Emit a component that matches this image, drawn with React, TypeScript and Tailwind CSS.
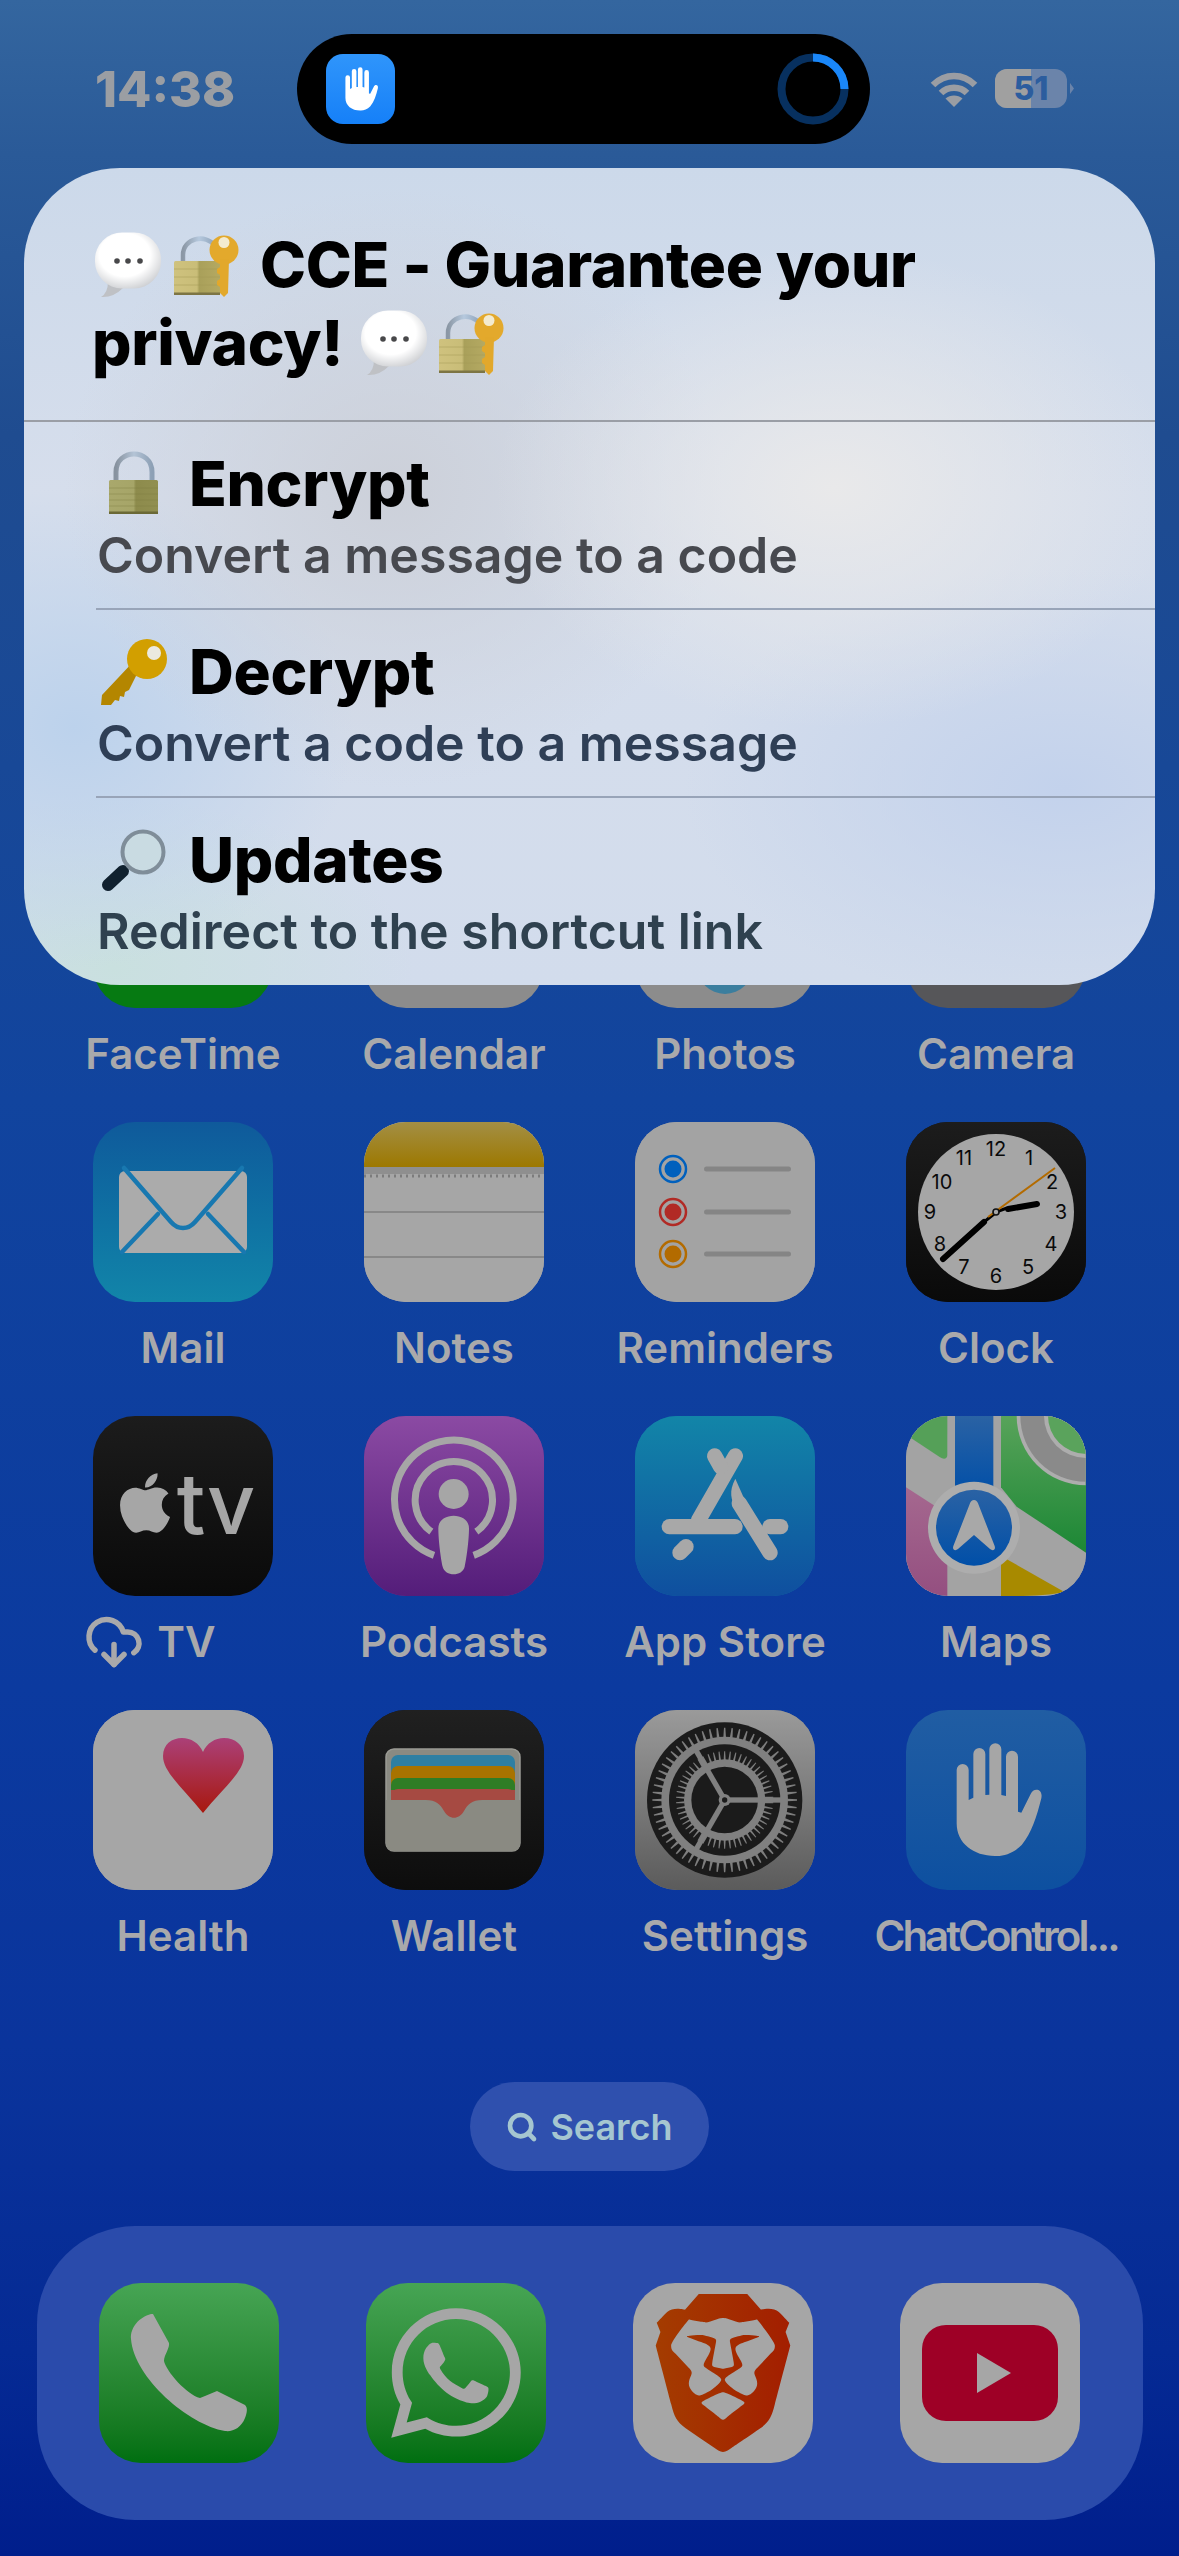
import { Search, CloudDownload } from 'lucide-react';
import { FaApple, FaWhatsapp } from 'react-icons/fa';
import { SiBrave } from 'react-icons/si';
import type { ReactNode } from 'react';

const GLYPH = '#a6a6a6';

// all hand-made icons use a 180 box, or 540 where the coordinates were read from a zoomed crop
function Tile({ className, children }: { className: string; children?: ReactNode }) {
  return (
    <div className={`relative w-[180px] h-[180px] rounded-[42px] overflow-hidden shrink-0 flex items-center justify-center ${className}`}>
      {children}
    </div>
  );
}

function Art({ box = 180, children }: { box?: number; children: ReactNode }) {
  return (
    <svg viewBox={`0 0 ${box} ${box}`} className="w-[180px] h-[180px] block">
      {children}
    </svg>
  );
}

function HandPath({ fill }: { fill: string }) {
  return (
    <path
      fill={fill}
      d="M1010 210a18 18 0 0 1 36 0L1046 300L1060 293L1060 162a18 18 0 0 1 36 0L1096 285L1108 284L1108 148a18 18 0 0 1 36 0L1144 285L1158 288L1158 170a18 18 0 0 1 36 0L1194 335L1204 338L1232 282C1240 262 1270 265 1264 295C1250 350 1235 400 1205 435C1180 460 1150 470 1125 468C1060 468 1010 430 1010 370Z"
    />
  );
}

function Mail() {
  return (
    <Art>
      <rect x="26" y="49" width="128" height="82" rx="6" fill="#ababab" />
      <g fill="none" stroke="#1878b0" strokeWidth="4.5" strokeLinecap="round">
        <path d="M31 46L78 100C85 108 95 108 102 100L149 46" />
        <path d="M65 92L29 130M115 92L151 130" />
      </g>
    </Art>
  );
}

function Notes() {
  return (
    <Art>
      <defs>
        <linearGradient id="notesTop" x1="0" y1="0" x2="0" y2="1">
          <stop offset="0" stopColor="#a38f45" />
          <stop offset="1" stopColor="#9d7800" />
        </linearGradient>
      </defs>
      <rect width="180" height="180" fill="#a6a6a6" />
      <rect width="180" height="45" fill="url(#notesTop)" />
      <rect y="45" width="180" height="7" fill="#8f8f8f" />
      <line x1="0" x2="180" y1="54" y2="54" stroke="#7c7c7c" strokeWidth="3" strokeDasharray="2 4" />
      <rect y="89" width="180" height="2" fill="#888888" />
      <rect y="134" width="180" height="2" fill="#888888" />
    </Art>
  );
}

function Reminders() {
  const dots = [
    { y: 47, c: '#0060bd' },
    { y: 90, c: '#b12a25' },
    { y: 132, c: '#b36b00' },
  ];
  return (
    <Art>
      <rect width="180" height="180" fill="#a3a3a3" />
      {dots.map(d => (
        <g key={d.y}>
          <circle cx="38" cy={d.y} r="13" fill="none" stroke={d.c} strokeWidth="2.5" />
          <circle cx="38" cy={d.y} r="8.5" fill={d.c} />
          <rect x="69" y={d.y - 2.5} width="87" height="5" rx="2.5" fill="#858585" />
        </g>
      ))}
    </Art>
  );
}

function Clock() {
  const nums = [
    ['12', 90, 34], ['1', 123, 43], ['2', 146, 67], ['3', 155, 97], ['4', 145, 129], ['5', 122, 152],
    ['6', 90, 161], ['7', 58, 152], ['8', 34, 129], ['9', 24, 97], ['10', 36, 67], ['11', 58, 43],
  ] as const;
  return (
    <Art>
      <defs>
        <linearGradient id="clockBg" x1="0" y1="0" x2="0" y2="1">
          <stop offset="0" stopColor="#1c1c1c" />
          <stop offset="1" stopColor="#0a0a0a" />
        </linearGradient>
      </defs>
      <rect width="180" height="180" fill="url(#clockBg)" />
      <circle cx="90" cy="90" r="78" fill="#a6a6a6" />
      {nums.map(([n, x, y]) => (
        <text key={n} x={x} y={y} textAnchor="middle" fontSize="20" fontFamily="Inter, sans-serif" fill="#0a0a0a">
          {n}
        </text>
      ))}
      <path d="M90 90L101 86" stroke="#000" strokeWidth="3" />
      <path d="M102 87L131 82" stroke="#000" strokeWidth="6" strokeLinecap="round" />
      <path d="M88 92L78 100" stroke="#000" strokeWidth="3" />
      <path d="M78 100L37 137" stroke="#000" strokeWidth="6" strokeLinecap="round" />
      <path d="M82 95L149 46" stroke="#b36b00" strokeWidth="2" />
      <circle cx="90" cy="90" r="3" fill="#a6a6a6" stroke="#111" strokeWidth="1.6" />
    </Art>
  );
}

function AppleTv() {
  return (
    <div className="flex items-center">
      <FaApple size={68} color={GLYPH} className="-mt-[6px]" />
      <span className="text-[84px] leading-none font-medium text-[#a6a6a6] -ml-[2px] -mt-[4px]">tv</span>
    </div>
  );
}

function Podcasts() {
  return (
    <Art box={540}>
      <defs>
        <linearGradient id="podBg" x1="0" y1="0" x2="0" y2="1">
          <stop offset="0" stopColor="#8b4aa3" />
          <stop offset="1" stopColor="#541d7a" />
        </linearGradient>
      </defs>
      <rect width="540" height="540" fill="url(#podBg)" />
      <g transform="translate(-853 -48)">
        <g fill="none" stroke={GLYPH} strokeWidth="21">
          <path d="M1063 466A178 178 0 1 1 1182 466" />
          <path d="M1055 395A116 116 0 1 1 1190 395" />
        </g>
        <circle cx="1122" cy="282" r="45" fill={GLYPH} />
        <path fill={GLYPH} d="M1076 385C1076 335 1168 335 1168 385C1168 420 1160 480 1155 500C1148 530 1096 530 1089 500C1084 480 1076 420 1076 385Z" />
      </g>
    </Art>
  );
}

function AppStore() {
  return (
    <Art box={540}>
      <defs>
        <linearGradient id="asBg" x1="0" y1="0" x2="0" y2="1">
          <stop offset="0" stopColor="#1285a8" />
          <stop offset="1" stopColor="#0f4f9f" />
        </linearGradient>
      </defs>
      <rect width="540" height="540" fill="url(#asBg)" />
      <g transform="translate(-45 -48)" fill="none" stroke="#a8a8a8" strokeWidth="46" strokeLinecap="round">
        <path d="M346 168L236 360" />
        <path d="M284 168L302 200" />
        <path d="M148 380H345" strokeLinecap="round" />
        <path d="M450 380H482" />
        <path d="M358 310L450 458" />
        <path d="M198 440L180 458" />
      </g>
      <g transform="translate(-45 -48)" fill="#a8a8a8">
        <path d="M346 236C325 275 335 300 345 320L400 340L370 290Z" />
      </g>
    </Art>
  );
}

function Maps() {
  return (
    <Art box={540}>
      <defs>
        <linearGradient id="mapGreen" x1="0" y1="0" x2="0" y2="1">
          <stop offset="0" stopColor="#58a35a" />
          <stop offset="1" stopColor="#1c8735" />
        </linearGradient>
        <linearGradient id="mapBlue" x1="0" y1="0" x2="0" y2="1">
          <stop offset="0" stopColor="#2a62a4" />
          <stop offset="1" stopColor="#004fa8" />
        </linearGradient>
        <linearGradient id="mapPink" x1="0" y1="0" x2="0" y2="1">
          <stop offset="0" stopColor="#a5688f" />
          <stop offset="1" stopColor="#944f80" />
        </linearGradient>
        <clipPath id="mapCorner">
          <rect x="1143" y="48" width="254" height="300" />
        </clipPath>
      </defs>
      <g transform="translate(-858 -48)">
        <rect x="858" y="48" width="540" height="540" fill="#a3a3a3" />
        <path d="M858 48V104L960 172C972 180 982 176 982 165V48Z" fill="#55a058" />
        <rect x="1005" y="48" width="115" height="240" fill="url(#mapBlue)" />
        <path d="M1143 48V262L1190 320L1398 458V48Z" fill="url(#mapGreen)" />
        <g clipPath="url(#mapCorner)">
          <circle cx="1398" cy="48" r="208" fill="#adadad" />
          <circle cx="1398" cy="48" r="197" fill="#8a8a8a" />
          <circle cx="1398" cy="48" r="126" fill="#adadad" />
          <circle cx="1398" cy="48" r="114" fill="#5aa35c" />
        </g>
        <path d="M858 262L945 318L982 400V588H858Z" fill="url(#mapPink)" />
        <path d="M1143 468L1332 575C1290 588 1200 588 1143 588Z" fill="#a88a00" />
        <circle cx="1062" cy="383" r="138" fill="#adadad" />
        <circle cx="1062" cy="383" r="114" fill="url(#mapBlue)" />
        <path d="M1062 300C1068 300 1072 305 1074 310L1124 438C1128 450 1118 454 1110 447L1062 405L1014 447C1006 454 996 450 1000 438L1050 310C1052 305 1056 300 1062 300Z" fill="#a8a8a8" />
      </g>
    </Art>
  );
}

function Health() {
  return (
    <Art>
      <defs>
        <linearGradient id="heart" x1="0" y1="0" x2="0" y2="1">
          <stop offset="0" stopColor="#ab4078" />
          <stop offset="1" stopColor="#a8180e" />
        </linearGradient>
      </defs>
      <rect width="180" height="180" fill="#a6a6a6" />
      <path fill="url(#heart)" d="M110 103C90 78 70 62 70 46C70 34 79 28 89 28C98 28 106 33 110 42C114 33 122 28 131 28C142 28 151 35 151 46C151 62 130 78 110 103Z" />
    </Art>
  );
}

function Wallet() {
  const bands = [
    { y: 45, c: '#2e7fa3' },
    { y: 56, c: '#a87300' },
    { y: 68, c: '#2f7d25' },
    { y: 79, c: '#a64a42' },
  ];
  return (
    <Art>
      <defs>
        <linearGradient id="walletBg" x1="0" y1="0" x2="0" y2="1">
          <stop offset="0" stopColor="#202020" />
          <stop offset="1" stopColor="#0d0d0d" />
        </linearGradient>
      </defs>
      <rect width="180" height="180" fill="url(#walletBg)" />
      <rect x="22" y="39" width="134" height="102" rx="8" fill="#8a8a82" stroke="#9a9a94" strokeWidth="1.5" />
      {bands.map(b => (
        <rect key={b.y} x="27" y={b.y} width="124" height="30" rx="7" fill={b.c} />
      ))}
      <path d="M22 90H156V134C156 138 153 141 149 141H30C25 141 22 138 22 134Z" fill="#8a8a82" />
      <path d="M27 80H151V90H118C108 90 104 94 100 101C95 110 85 110 80 101C76 94 72 90 62 90H27Z" fill="#a64a42" />
    </Art>
  );
}

function Settings() {
  const outer = Array.from({ length: 60 }, (_, i) => i * 6);
  const inner = Array.from({ length: 54 }, (_, i) => (i * 360) / 54);
  return (
    <Art box={540}>
      <defs>
        <linearGradient id="setBg" x1="0" y1="0" x2="0" y2="1">
          <stop offset="0" stopColor="#9a9a9a" />
          <stop offset="1" stopColor="#5b5b5b" />
        </linearGradient>
      </defs>
      <rect width="540" height="540" fill="url(#setBg)" />
      <g transform="translate(269 270)">
        <circle r="233" fill="#1b1b1b" />
        {outer.map(a => (
          <path key={a} transform={`rotate(${a})`} d="M-4 -188L-2 -217H2L4 -188Z" fill="#7d7d7d" />
        ))}
        <circle r="190" fill="#808080" />
        <circle r="167" fill="#1b1b1b" />
        {inner.map(a => (
          <path key={a} transform={`rotate(${a})`} d="M-3 -120L-1.5 -146H1.5L3 -120Z" fill="#7d7d7d" />
        ))}
        <circle r="122" fill="#808080" />
        <circle r="100" fill="#1b1b1b" />
        {[90, 210, 330].map(a => (
          <rect key={a} transform={`rotate(${a})`} x="-8" y="-172" width="16" height="172" fill="#808080" />
        ))}
        <circle r="18" fill="#808080" />
        <circle r="8" fill="#1b1b1b" />
      </g>
    </Art>
  );
}

function ChatControl() {
  return (
    <Art box={540}>
      <g transform="translate(-858 -30)">
        <HandPath fill={GLYPH} />
      </g>
    </Art>
  );
}

function Phone() {
  return (
    <Art>
      <path fill={GLYPH} d="M52 31L54 31L70 60C71 65 65 72 65 78C67 88 88 112 101 115L106 113L118 108L146 122C149 125 148 130 146 135C142 145 134 149 126 148C90 142 35 95 32 56C31 45 40 34 52 31Z" />
    </Art>
  );
}

function YouTube() {
  return (
    <Art>
      <rect x="22" y="42" width="136" height="96" rx="24" fill="#9e0026" />
      <path d="M77 70L111 90L77 110Z" fill={GLYPH} />
    </Art>
  );
}

function Balloon() {
  return (
    <svg viewBox="15 22 66 68" className="w-[66px] h-[68px] inline-block align-[-12px]">
      <defs>
        <radialGradient id="balloonFill" cx="0.45" cy="0.4" r="0.7">
          <stop offset="0.55" stopColor="#ffffff" />
          <stop offset="1" stopColor="#c2c4c8" />
        </radialGradient>
      </defs>
      <path d="M28 72Q28 84 21 88Q33 89 43 79Z" fill="#bfc1c5" />
      <rect x="15" y="23.5" width="66" height="56" rx="27" fill="url(#balloonFill)" />
      <circle cx="37" cy="52" r="2.8" fill="#48484a" />
      <circle cx="48" cy="52" r="2.8" fill="#48484a" />
      <circle cx="60" cy="52" r="2.8" fill="#48484a" />
    </svg>
  );
}

function LockKey() {
  return (
    <svg viewBox="94 24 65 66" className="w-[65px] h-[66px] inline-block align-[-12px] ml-[13px]">
      <defs>
        <linearGradient id="lockBody" x1="0" y1="0" x2="1" y2="0">
          <stop offset="0" stopColor="#cfc27e" />
          <stop offset="0.5" stopColor="#c9bd78" />
          <stop offset="0.55" stopColor="#a9a05a" />
          <stop offset="1" stopColor="#b4a962" />
        </linearGradient>
        <linearGradient id="shackle" x1="0" y1="0" x2="1" y2="0">
          <stop offset="0" stopColor="#8b97a5" />
          <stop offset="0.5" stopColor="#b6c9de" />
          <stop offset="1" stopColor="#8ea3ba" />
        </linearGradient>
      </defs>
      <path d="M103 53V46C103 29 126 24 135 37" fill="none" stroke="url(#shackle)" strokeWidth="4.5" />
      <rect x="94" y="52" width="46" height="34" rx="1.5" fill="url(#lockBody)" />
      <path d="M94 60H140M94 68H140M94 76H140" stroke="#a39a57" strokeWidth="0.8" opacity="0.6" />
      <rect x="94" y="83.5" width="46" height="2.5" fill="#7d7544" />
      <circle cx="144" cy="41" r="14.5" fill="#e3a92c" />
      <circle cx="144" cy="33.5" r="5.5" fill="#f3ebd0" />
      <path d="M140 50H149L148 84L144 88L140 84V78L137 76V72L140 70V66L137 64V60L140 58Z" fill="#e2a82b" />
    </svg>
  );
}

function LockEmoji() {
  return (
    <svg viewBox="0 0 72 72" className="w-[72px] h-[72px] shrink-0">
      <defs>
        <linearGradient id="oliveBody" x1="0" y1="0" x2="1" y2="0">
          <stop offset="0" stopColor="#a9a86c" />
          <stop offset="0.5" stopColor="#a6a568" />
          <stop offset="0.55" stopColor="#8d8b4c" />
          <stop offset="1" stopColor="#918f50" />
        </linearGradient>
        <linearGradient id="oliveShackle" x1="0" y1="0" x2="1" y2="0">
          <stop offset="0" stopColor="#87929f" />
          <stop offset="0.5" stopColor="#b4c4d6" />
          <stop offset="1" stopColor="#8da0b5" />
        </linearGradient>
      </defs>
      <path d="M20 34V24C20 0 56 0 56 24V34" fill="none" stroke="url(#oliveShackle)" strokeWidth="5" />
      <rect x="13" y="32" width="49" height="34" rx="1.5" fill="url(#oliveBody)" />
      <path d="M13 40H62M13 46H62M13 52H62M13 58H62" stroke="#7f7d42" strokeWidth="0.8" opacity="0.5" />
      <rect x="13" y="63.5" width="49" height="2.5" fill="#6b6936" />
    </svg>
  );
}

function KeyEmoji() {
  return (
    <svg viewBox="0 0 72 72" className="w-[72px] h-[72px] shrink-0">
      <path d="M44 32L38 25L6 59L5 69H15L19 64L23 65L24 60L28 61L29 56L33 54Z" fill="#b48600" />
      <circle cx="51" cy="23" r="20" fill="#d29f00" />
      <circle cx="58" cy="17" r="7" fill="#ebe9e0" />
    </svg>
  );
}

function GlassEmoji() {
  return (
    <svg viewBox="0 0 72 72" className="w-[72px] h-[72px] shrink-0">
      <line x1="27" y1="47" x2="12" y2="61" stroke="#10212f" strokeWidth="12" strokeLinecap="round" />
      <circle cx="47" cy="28" r="20.5" fill="#c9dbe2" stroke="#7f8d99" strokeWidth="4" />
    </svg>
  );
}

type AppItem = { label: string; tile: ReactNode };

const apps: AppItem[] = [
  { label: 'FaceTime', tile: <Tile className="bg-[#067a12]" /> },
  { label: 'Calendar', tile: <Tile className="bg-[#8c8c8c]" /> },
  {
    label: 'Photos',
    tile: (
      <Tile className="bg-[#8c8c8c]">
        <Art>
          <circle cx="90" cy="138" r="28" fill="#3b7e9e" />
        </Art>
      </Tile>
    ),
  },
  { label: 'Camera', tile: <Tile className="bg-[#565659]" /> },
  { label: 'Mail', tile: <Tile className="bg-gradient-to-b from-[#0f5a9b] to-[#1285a9]"><Mail /></Tile> },
  { label: 'Notes', tile: <Tile className="bg-[#a6a6a6]"><Notes /></Tile> },
  { label: 'Reminders', tile: <Tile className="bg-[#a3a3a3]"><Reminders /></Tile> },
  { label: 'Clock', tile: <Tile className="bg-[#141414]"><Clock /></Tile> },
  { label: 'TV', tile: <Tile className="bg-gradient-to-b from-[#1c1c1c] to-[#0a0a0a]"><AppleTv /></Tile> },
  { label: 'Podcasts', tile: <Tile className="bg-[#6e2f8e]"><Podcasts /></Tile> },
  { label: 'App Store', tile: <Tile className="bg-[#0f6aa3]"><AppStore /></Tile> },
  { label: 'Maps', tile: <Tile className="bg-[#a3a3a3]"><Maps /></Tile> },
  { label: 'Health', tile: <Tile className="bg-[#a6a6a6]"><Health /></Tile> },
  { label: 'Wallet', tile: <Tile className="bg-[#141414]"><Wallet /></Tile> },
  { label: 'Settings', tile: <Tile className="bg-[#7a7a7a]"><Settings /></Tile> },
  { label: 'ChatControl...', tile: <Tile className="bg-gradient-to-b from-[#205da3] to-[#0d50a0]"><ChatControl /></Tile> },
];

const rows = [
  { title: 'Encrypt', sub: 'Convert a message to a code', icon: <LockEmoji />, tone: 'text-[#47494f]' },
  { title: 'Decrypt', sub: 'Convert a code to a message', icon: <KeyEmoji />, tone: 'text-[#2f3f56]' },
  { title: 'Updates', sub: 'Redirect to the shortcut link', icon: <GlassEmoji />, tone: 'text-[#2f414f]' },
];

function StatusBar() {
  return (
    <div className="flex items-center pl-[95px] pt-[34px]">
      <div className="w-[202px] text-[50px] leading-none font-extrabold text-[#9b9ea3]">14:38</div>
      <div className="w-[573px] h-[110px] rounded-full bg-black flex items-center justify-between pl-[29px] pr-[21px]">
        <div className="w-[69px] h-[70px] rounded-[17px] bg-gradient-to-b from-[#2f95fb] to-[#1580f8]">
          <svg viewBox="858 30 540 540" className="w-[69px] h-[70px]">
            <HandPath fill="#ffffff" />
          </svg>
        </div>
        <svg viewBox="0 0 72 72" className="w-[72px] h-[72px]">
          <circle cx="36" cy="36" r="31.5" fill="none" stroke="#07305f" strokeWidth="8" />
          <path d="M36 4.5A31.5 31.5 0 0 1 67.5 36" fill="none" stroke="#1a87f9" strokeWidth="8" />
        </svg>
      </div>
      <svg viewBox="0 0 48 35" className="w-[48px] h-[35px] ml-[60px]">
        <g fill="none" stroke="#9a9da3" strokeWidth="6.5">
          <path d="M3 13C15 1 33 1 45 13" />
          <path d="M11 21C18 14 30 14 37 21" />
        </g>
        <path d="M24 35L15.5 26.5C20 22.5 28 22.5 32.5 26.5Z" fill="#9a9da3" />
      </svg>
      <svg viewBox="0 -4 80 48" className="w-[80px] h-[48px] ml-[17px]">
        <rect width="72" height="39" rx="12" fill="#6b84aa" />
        <path d="M12 0H36V39H12A12 12 0 0 1 0 27V12A12 12 0 0 1 12 0Z" fill="#a0a0a0" />
        <path d="M75 14L79 19.5L75 25Z" fill="#6b84aa" />
        <text x="36" y="31" textAnchor="middle" fontSize="32" fontWeight="800" fontFamily="Inter, sans-serif" fill="#2c5d9e">51</text>
      </svg>
    </div>
  );
}

function ShortcutPanel() {
  return (
    <div className="absolute left-[24px] top-[168px] w-[1131px] h-[817px] rounded-[96px] overflow-hidden bg-[radial-gradient(ellipse_340px_240px_at_810px_320px,#e9e9ea_0%,#e9e9ea00_100%),radial-gradient(ellipse_330px_300px_at_370px_320px,#ccd0d9_0%,#ccd0d900_100%),radial-gradient(ellipse_280px_240px_at_50px_560px,#bcd2ec_0%,#bcd2ec00_100%),radial-gradient(ellipse_300px_170px_at_90px_800px,#c9e0df_0%,#c9e0df00_100%),radial-gradient(ellipse_380px_220px_at_1040px_620px,#c3d2ec_0%,#c3d2ec00_100%),linear-gradient(180deg,#ccd9ea_0%,#d6deec_40%,#d2dcec_100%)]">
      <div className="h-[254px] pt-[58px] pl-[68px] border-b-2 border-[#9a9ea6] text-[62px] leading-[78px] font-extrabold text-black tracking-[-0.3px]">
        <div className="whitespace-nowrap"><span className="ml-[3px]"><Balloon /></span><LockKey /><span className="ml-[21px]">CCE - Guarantee your</span></div>
        <div className="whitespace-nowrap">privacy!<span className="ml-[18px]"><Balloon /></span><span className="-ml-[1px]"><LockKey /></span></div>
      </div>
      {rows.map((r, i) => (
        <div key={r.title} className="ml-[72px]">
          <div className={`h-[188px] pt-[24px] ${i < rows.length - 1 ? 'border-b-2 border-[#98a4b8]' : ''}`}>
            <div className="flex items-center h-[76px]">
              <div className="w-[93px]">{r.icon}</div>
              <span className="text-[62px] leading-[76px] font-extrabold text-black tracking-[-0.3px]">{r.title}</span>
            </div>
            <div className={`mt-[3px] pl-[1px] text-[50px] leading-[60px] font-semibold ${r.tone}`}>{r.sub}</div>
          </div>
        </div>
      ))}
    </div>
  );
}

function Dock() {
  return (
    <div className="mt-[55px] ml-[37px] w-[1106px] h-[294px] rounded-[98px] bg-[#2a4bab] flex items-center pl-[62px] gap-x-[87px]">
      <Tile className="bg-gradient-to-b from-[#46a554] to-[#006f10]"><Phone /></Tile>
      <Tile className="bg-gradient-to-b from-[#46a554] to-[#006f10]"><FaWhatsapp size={148} color={GLYPH} /></Tile>
      <Tile className="bg-[#a6a6a6]">
        <svg width="0" height="0" className="absolute">
          <defs>
            <linearGradient id="braveFill" x1="0" y1="0" x2="1" y2="0">
              <stop offset="0" stopColor="#a43c00" />
              <stop offset="1" stopColor="#a31e00" />
            </linearGradient>
          </defs>
        </svg>
        <SiBrave size={158} fill="url(#braveFill)" />
      </Tile>
      <Tile className="bg-[#a6a6a6]"><YouTube /></Tile>
    </div>
  );
}

export default function App() {
  return (
    <div className="relative w-[1179px] h-[2556px] overflow-hidden font-['Inter',sans-serif] bg-[linear-gradient(180deg,#34669f_0%,#2a5a98_6%,#1f4c90_17%,#11449e_43%,#0b3a9f_66%,#0a349c_80%,#052a94_92%,#001e8c_100%)]">
      <StatusBar />
      <div className="mt-[684px] pl-[93px] grid grid-cols-[repeat(4,180px)] gap-x-[91px] auto-rows-[294px]">
        {apps.map(app => (
          <div key={app.label} className="flex flex-col items-center">
            {app.tile}
            <div className="mt-[22px] flex items-center gap-[13px] whitespace-nowrap text-[42px] leading-[48px] font-semibold text-[#a9a9ab]">
              {app.label === 'TV' && <CloudDownload size={60} strokeWidth={2.2} className="-ml-[66px] -my-[6px]" />}
              <span className={app.label === 'ChatControl...' ? 'tracking-[-3px]' : ''}>{app.label}</span>
            </div>
          </div>
        ))}
      </div>
      <div className="mt-[78px] ml-[470px] w-[239px] h-[89px] rounded-full bg-[#2f50ae] flex items-center justify-center gap-[12px] text-[36px] font-semibold text-[#a5c6d0]">
        <Search size={32} strokeWidth={3.5} />
        <span>Search</span>
      </div>
      <Dock />
      <ShortcutPanel />
    </div>
  );
}
